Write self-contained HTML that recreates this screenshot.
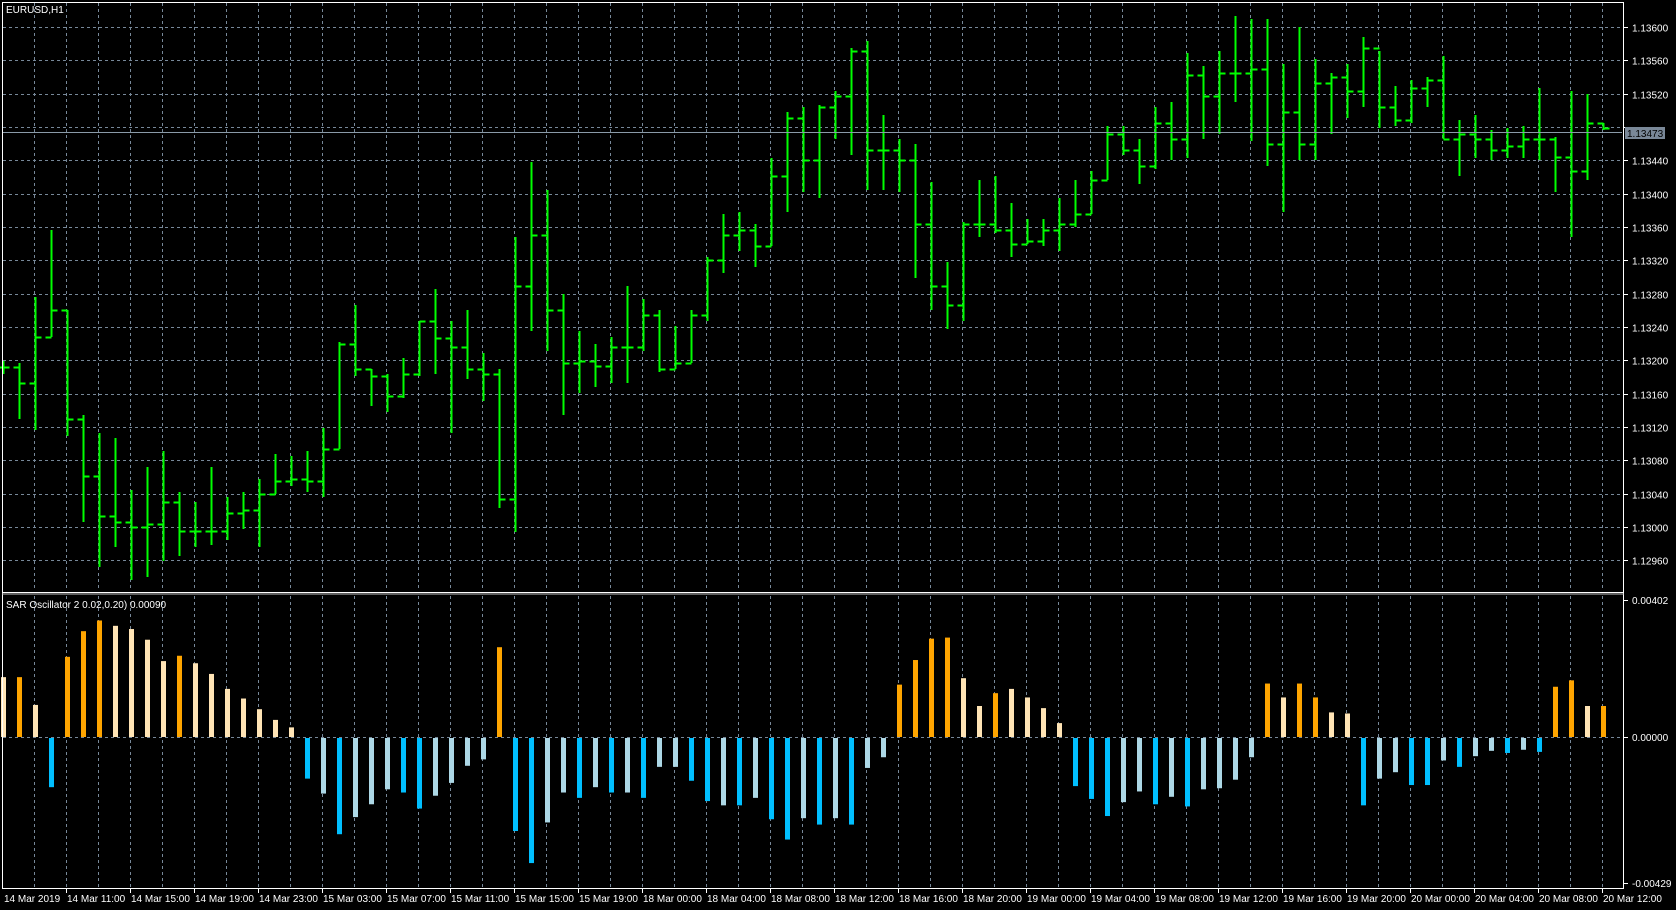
<!DOCTYPE html>
<html><head><meta charset="utf-8"><style>
html,body{margin:0;padding:0;background:#000;width:1676px;height:910px;overflow:hidden}
svg{display:block}
text{font-family:"Liberation Sans",sans-serif;font-size:10px;fill:#fff}
</style></head><body>
<svg id="s" width="1676" height="910" xmlns="http://www.w3.org/2000/svg"></svg>
<script>
var S=1.069,out=[];
function L(x1,y1,x2,y2,c,w,d){out.push('<line x1="'+x1+'" y1="'+y1+'" x2="'+x2+'" y2="'+y2+'" stroke="'+c+'" stroke-width="'+(w||1)+'"'+(d?' stroke-dasharray="'+d+'"':'')+'/>');}
function T(x,y,s,a){out.push('<text x="'+x+'" y="'+y+'"'+(a?' text-anchor="'+a+'"':'')+'>'+s+'</text>');}
var G='#778899';
for(var x=34.5;x<1623;x+=32){L(x,3,x,591,G,1,'3 3');L(x,596,x,888,G,1,'3 3');}
var prices=['1.13600','1.13560','1.13520','1.13480','1.13440','1.13400','1.13360','1.13320','1.13280','1.13240','1.13200','1.13160','1.13120','1.13080','1.13040','1.13000','1.12960'];
for(var i=0;i<17;i++){var y=Math.round(27+i*33.33)+0.5;L(3,y,1622,y,G,1,'3 3');L(1623,y,1628,y,'#fff');if(i!=3)T(1632,y+4,prices[i]);}
L(3,737.5,1622,737.5,G,1,'3 3');
var C=[[338,350,343,343],[340,392,343,358],[278,402,358,315],[215,315,315,290],[290,408,290,392],[388,488,392,445],[405,530,445,483],[410,512,483,488],[458,543,488,493],[437,540,493,490],[422,525,490,470],[460,520,470,497],[470,512,497,497],[437,510,497,497],[465,505,497,480],[460,495,480,477],[448,512,477,462],[425,462,462,450],[427,455,450,448],[422,460,448,450],[400,465,450,420],[320,420,420,322],[285,352,322,345],[345,380,345,352],[350,385,352,370],[335,372,370,350],[300,352,350,300],[270,350,300,316],[300,405,316,325],[290,355,325,345],[330,375,345,350],[345,475,350,467],[222,498,467,268],[152,310,268,220],[178,328,220,290],[275,388,290,340],[310,368,340,338],[322,362,338,342],[315,358,342,325],[268,358,325,325],[280,328,325,295],[290,348,295,345],[305,345,345,340],[290,340,340,295],[240,300,295,243],[200,255,243,220],[198,235,220,215],[210,250,215,230],[148,230,230,165],[105,198,165,110],[100,180,110,150],[98,185,150,100],[85,130,100,90],[45,145,90,48],[38,178,48,140],[108,178,140,140],[130,180,140,150],[135,260,150,210],[170,290,210,268],[245,308,268,285],[208,300,285,210],[168,222,210,210],[165,218,210,215],[190,240,215,228],[205,228,228,225],[205,230,225,215],[185,235,215,210],[168,212,210,200],[160,200,200,168],[118,168,168,125],[118,145,125,140],[130,172,140,155],[100,158,155,115],[95,150,115,130],[50,148,130,70],[62,130,70,90],[48,125,90,68],[15,95,68,68],[18,132,68,65],[18,155,65,135],[60,198,135,105],[25,150,105,135],[55,150,135,78],[68,125,78,72],[60,110,72,85],[35,100,85,45],[48,120,45,100],[80,118,100,112],[75,115,112,82],[72,100,82,75],[52,130,75,130],[112,165,130,125],[108,148,125,130],[122,150,130,140],[120,148,140,137],[118,148,137,130],[82,150,130,130],[128,180,130,147],[85,222,147,160],[88,168,160,115],[115,122,115,120]];
var GR='#00ff00';
C.forEach(function(c,k){var x=3+16*k+0.5;var h=Math.round(c[0]*S),l=Math.round(c[1]*S),o=Math.round(c[2]*S)+0.5,cl=Math.round(c[3]*S)+0.5;
L(x,h,x,l,GR,2);L(x-6,o,x,o,GR,2);L(x,cl,x+6,cl,GR,2);});
L(3,132.5,1622,132.5,'#8a9aa8',1);
out.push('<rect x="1625" y="127" width="40" height="12" fill="#7a8898"/>');
out.push('<text x="1627" y="137" style="fill:#000">1.13473</text>');
var O=[56,56,30,-46,75,99,109,104,101,91,71,76,69,59,45,36,26,16,9,-38,-52,-90,-74,-62,-48,-51,-66,-54,-42,-26,-20,84,-87,-117,-79,-51,-56,-46,-51,-51,-56,-27,-27,-40,-59,-63,-63,-56,-76,-95,-75,-81,-75,-81,-28,-18,49,72,92,93,55,29,41,45,37,27,13,-45,-57,-73,-60,-50,-62,-55,-64,-48,-47,-39,-18,50,37,50,37,23,22,-63,-38,-32,-44,-44,-21,-27,-17,-12,-14,-11,-13,47,53,29,29];
var OR=[1,4,5,6,11,31,56,57,58,59,62,79,81,82,97,98,100];
var DB=[3,19,21,25,26,32,33,36,38,40,43,44,46,48,49,51,53,67,68,69,72,74,85,88,89,91,94,96];
O.forEach(function(v,k){var hgt=Math.abs(v)*S,x=1+16*k,col;
if(v>=0){col=OR.indexOf(k)>=0?'#ffa500':'#ffe4b5';out.push('<rect x="'+x+'" y="'+(737-hgt)+'" width="5" height="'+hgt+'" fill="'+col+'"/>');}
else{col=DB.indexOf(k)>=0?'#00bfff':'#add8e6';out.push('<rect x="'+x+'" y="738" width="5" height="'+hgt+'" fill="'+col+'"/>');}
});
L(2.5,2,2.5,889,'#fff');L(2,2.5,1624,2.5,'#fff');L(1623.5,2,1623.5,889,'#fff');
L(2,592.5,1624,592.5,'#fff');L(2,594,1624,594,'#c0c0c0',1);
L(2,888.5,1624,888.5,'#fff');
L(1623,600.5,1628,600.5,'#fff');T(1632,604,'0.00402');
L(1623,737.5,1628,737.5,'#fff');T(1632,741,'0.00000');
L(1623,883.5,1628,883.5,'#fff');T(1632,887,'-0.00429');
T(6,13,'EURUSD,H1');
T(6,608,'SAR Oscillator 2 0.02,0.20) 0.00090');
var tl=['14 Mar 2019','14 Mar 11:00','14 Mar 15:00','14 Mar 19:00','14 Mar 23:00','15 Mar 03:00','15 Mar 07:00','15 Mar 11:00','15 Mar 15:00','15 Mar 19:00','18 Mar 00:00','18 Mar 04:00','18 Mar 08:00','18 Mar 12:00','18 Mar 16:00','18 Mar 20:00','19 Mar 00:00','19 Mar 04:00','19 Mar 08:00','19 Mar 12:00','19 Mar 16:00','19 Mar 20:00','20 Mar 00:00','20 Mar 04:00','20 Mar 08:00','20 Mar 12:00'];
tl.forEach(function(s,i){var x=i==0?3:66+64*(i-1);if(i>0)L(x+0.5,889,x+0.5,893,'#fff');T(x+1,902,s);});
document.getElementById('s').innerHTML=out.join('');
</script>
</body></html>
